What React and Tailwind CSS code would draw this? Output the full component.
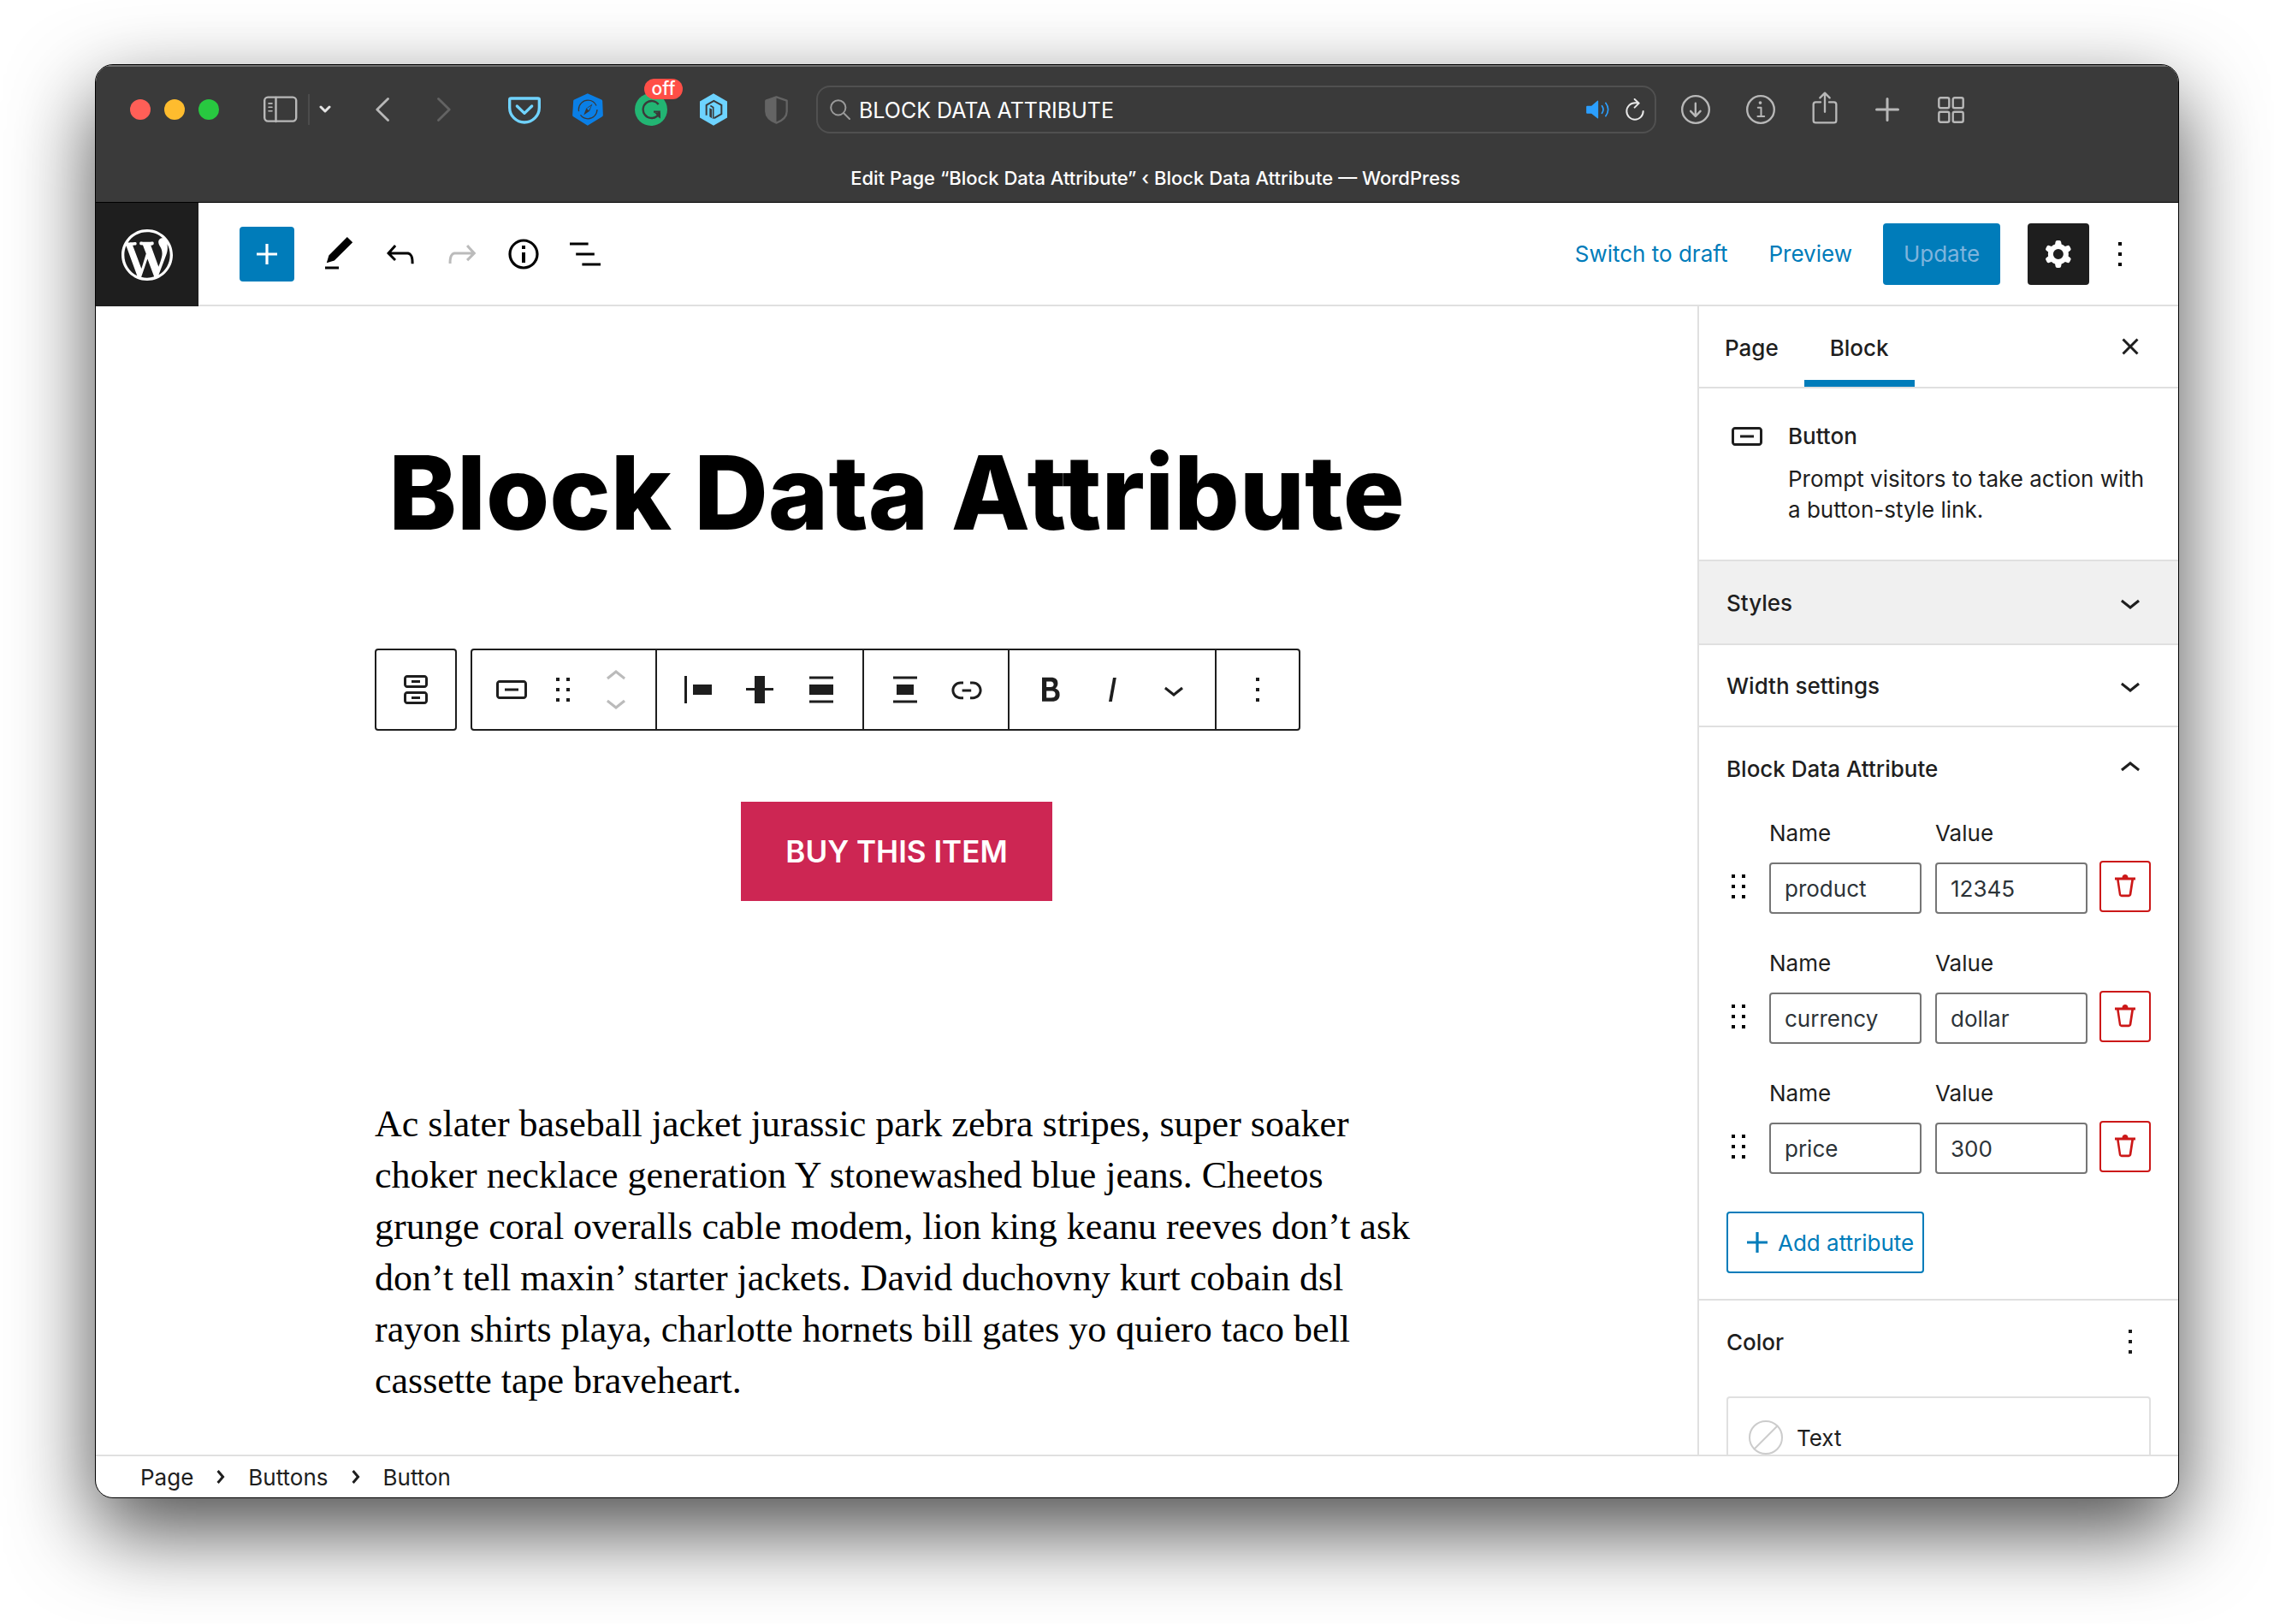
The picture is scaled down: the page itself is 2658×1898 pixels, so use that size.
import React from "react";

const paths = {
  wordpress:
    "M20 10c0-5.51-4.49-10-10-10C4.48 0 0 4.49 0 10c0 5.52 4.48 10 10 10 5.51 0 10-4.48 10-10zM7.78 15.37L4.37 6.22c.55-.02 1.17-.08 1.17-.08.5-.06.44-1.13-.06-1.11 0 0-1.45.11-2.37.11-.18 0-.37 0-.58-.01C4.12 2.69 6.87 1.11 10 1.11c2.33 0 4.45.87 6.05 2.34-.68-.11-1.65.39-1.65 1.58 0 .74.45 1.36.9 2.1.35.61.55 1.36.55 2.46 0 1.49-1.4 5-1.4 5l-3.03-8.37c.54-.02.82-.17.82-.17.5-.05.44-1.25-.06-1.22 0 0-1.44.12-2.38.12-.87 0-2.33-.12-2.33-.12-.5-.03-.56 1.2-.06 1.22l.92.08 1.26 3.41zM17.41 10c.24-.64.74-1.87.43-4.25.7 1.29 1.05 2.71 1.05 4.25 0 3.29-1.73 6.24-4.4 7.78.97-2.59 1.94-5.2 2.92-7.78zM6.1 18.09C3.12 16.65 1.11 13.53 1.11 10c0-1.3.23-2.48.72-3.59C3.25 10.3 4.67 14.2 6.1 18.09zm4.03-6.63l2.58 6.98c-.86.29-1.76.45-2.71.45-.79 0-1.57-.11-2.29-.33.81-2.38 1.62-4.74 2.42-7.1z",
  plus: "M18 11.2h-5.2V6h-1.6v5.2H6v1.6h5.2V18h1.6v-5.2H18z",
  edit: "M20.1 5.1L16.9 2 6.2 12.7l-1.3 4.4 4.5-1.3L20.1 5.1zM4 20.8h8v-1.5H4v1.5z",
  undo: "M18.3 11.7c-.6-.6-1.4-.9-2.3-.9H6.7l2.9-3.3-1.1-1-4.5 5L8.5 16l1-1-2.7-2.7H16c.5 0 .9.2 1.3.5 1 1 1 3.4 1 4.5v.3h1.5v-.2c0-1.5 0-4.3-1.5-5.7z",
  redo: "M15.6 6.5l-1.1 1 2.9 3.3H8c-.9 0-1.7.3-2.3.9-1.4 1.5-1.4 4.2-1.4 5.6v.2h1.5v-.3c0-1.1 0-3.5 1-4.5.3-.3.7-.5 1.3-.5h9.2L14.5 15l1.1 1.1 4.6-4.6-4.6-5z",
  info: "M12 3.2c-4.8 0-8.8 3.9-8.8 8.8 0 4.8 3.9 8.8 8.8 8.8 4.8 0 8.8-3.9 8.8-8.8 0-4.8-4-8.8-8.8-8.8zm0 16c-4 0-7.2-3.3-7.2-7.2C4.8 8 8 4.8 12 4.8s7.2 3.3 7.2 7.2c0 4-3.2 7.2-7.2 7.2zM11 17h2v-6h-2v6zm0-8h2V7h-2v2z",
  listView:
    "M13.8 5.2H3v1.5h10.8V5.2zm-3.6 12v1.5H21v-1.5H10.2zm7.2-6H6.6v1.5h10.8v-1.5z",
  cog: "M10.289 4.836A1 1 0 0111.275 4h1.306a1 1 0 01.987.836l.244 1.466c.787.26 1.503.679 2.108 1.218l1.393-.522a1 1 0 011.216.437l.653 1.13a1 1 0 01-.23 1.273l-1.148.944a6.025 6.025 0 010 2.435l1.149.946a1 1 0 01.23 1.272l-.653 1.13a1 1 0 01-1.216.437l-1.394-.522c-.605.54-1.32.958-2.108 1.218l-.244 1.466a1 1 0 01-.987.836h-1.306a1 1 0 01-.986-.836l-.244-1.466a5.995 5.995 0 01-2.108-1.218l-1.394.522a1 1 0 01-1.217-.436l-.653-1.131a1 1 0 01.23-1.272l1.149-.946a6.026 6.026 0 010-2.435l-1.148-.944a1 1 0 01-.23-1.272l.653-1.131a1 1 0 011.217-.437l1.393.522a5.994 5.994 0 012.108-1.218l.244-1.466zM14.929 12a3 3 0 11-6 0 3 3 0 016 0z",
  more: "M13 19h-2v-2h2v2zm0-6h-2v-2h2v2zm0-6h-2V5h2v2z",
  close:
    "M12 13.06l3.712 3.713 1.061-1.06L13.061 12l3.712-3.712-1.06-1.06L12 10.938 8.288 7.227l-1.061 1.06L10.939 12l-3.712 3.712 1.06 1.061L12 13.061z",
  button:
    "M19 6.5H5c-1.1 0-2 .9-2 2v7c0 1.1.9 2 2 2h14c1.1 0 2-.9 2-2v-7c0-1.1-.9-2-2-2zm.5 9c0 .3-.2.5-.5.5H5c-.3 0-.5-.2-.5-.5v-7c0-.3.2-.5.5-.5h14c.3 0 .5.2.5.5v7zM8 12.8h8v-1.5H8v1.5z",
  buttons:
    "M14.5 17.5H9.5V16H14.5V17.5Z M14.5 8H9.5V6.5H14.5V8Z M7 3.5H17C18.1046 3.5 19 4.39543 19 5.5V9C19 10.1046 18.1046 11 17 11H7C5.89543 11 5 10.1046 5 9V5.5C5 4.39543 5.89543 3.5 7 3.5ZM17 5H7C6.72386 5 6.5 5.22386 6.5 5.5V9C6.5 9.27614 6.72386 9.5 7 9.5H17C17.2761 9.5 17.5 9.27614 17.5 9V5.5C17.5 5.22386 17.2761 5 17 5Z M7 13H17C18.1046 13 19 13.8954 19 15V18.5C19 19.6046 18.1046 20.5 17 20.5H7C5.89543 20.5 5 19.6046 5 18.5V15C5 13.8954 5.89543 13 7 13ZM17 14.5H7C6.72386 14.5 6.5 14.7239 6.5 15V18.5C6.5 18.7761 6.72386 19 7 19H17C17.2761 19 17.5 18.7761 17.5 18.5V15C17.5 14.7239 17.2761 14.5 17 14.5Z",
  drag: "M8 7h2V5H8v2zm0 6h2v-2H8v2zm0 6h2v-2H8v2zm6-14v2h2V5h-2zm0 8h2v-2h-2v2zm0 6h2v-2h-2v2z",
  up: "M6.5 12.4L12 8l5.5 4.4-.9 1.2L12 10l-4.5 3.6-1-1.2z",
  down: "M17.5 11.6L12 16l-5.5-4.4.9-1.2L12 14l4.5-3.6 1 1.2z",
  justifyLeft: "M9 9v6h11V9H9zM4 20h1.5V4H4v16z",
  justifyCenter: "M9 4h6v7h5v1.5h-5V20H9v-7.5H4V11h5z",
  justifyStretch: "M5 9v6h14V9H5zM5 4.2v1.5h14V4.2H5zM5 19.8h14v-1.5H5z",
  align: "M7 9v6h10V9H7zM5 19.8h14v-1.5H5zM5 4.3v1.5h14V4.3H5z",
  link: "M15.6 7.2H14v1.5h1.6c2 0 3.7 1.7 3.7 3.7s-1.7 3.7-3.7 3.7H14v1.5h1.6c2.8 0 5.2-2.3 5.2-5.2 0-2.9-2.3-5.2-5.2-5.2zM4.7 12.4c0-2 1.7-3.7 3.7-3.7H10V7.2H8.4c-2.9 0-5.2 2.3-5.2 5.2 0 2.9 2.3 5.2 5.2 5.2H10v-1.5H8.4c-2 0-3.7-1.7-3.7-3.7zm4.6.9h5.3v-1.5H9.3v1.5z",
  bold: "M14.7 11.3c1-.6 1.5-1.6 1.5-3 0-2.3-1.3-3.4-4-3.4H7v14h5.8c1.4 0 2.5-.3 3.3-1 .8-.7 1.2-1.7 1.2-2.9.1-1.9-.8-3.1-2.6-3.7zm-5.1-4h2.3c.6 0 1.1.1 1.4.4.3.3.5.7.5 1.2s-.2 1-.5 1.2c-.3.3-.8.4-1.4.4H9.6V7.3zm4.6 9c-.4.3-1 .4-1.7.4H9.6v-3.9h2.9c.7 0 1.3.2 1.7.5.4.3.6.8.6 1.5s-.2 1.2-.6 1.5z",
  italic: "M12.5 5L10 19h1.9l2.5-14z",
  trash:
    "M20 5h-5.7c0-1.3-1-2.3-2.3-2.3S9.7 3.7 9.7 5H4v2h1.5v.3l1.7 11.1c.1 1 1 1.7 2 1.7h5.7c1 0 1.8-.7 2-1.7l1.7-11.1V7H20V5zm-3.2 2l-1.7 11.1c0 .1-.1.2-.3.2H9.1c-.1 0-.3-.1-.3-.2L7.2 7h9.6z",
  crumb:
    "M10.8622 8.04053L14.2805 12.0286L10.8622 16.0167L9.72327 15.0405L12.3049 12.0286L9.72327 9.01672L10.8622 8.04053Z",
};

function Icon({ name, className = "size-12", viewBox = "0 0 24 24" }) {
  return (
    <svg viewBox={viewBox} className={`shrink-0 ${className}`} fill="currentColor" fillRule="evenodd" aria-hidden="true">
      <path d={paths[name]} />
    </svg>
  );
}

function IconButton({ name, label, className = "size-[72px]", disabled }) {
  return (
    <button type="button" aria-label={label} disabled={disabled} className={`flex shrink-0 items-center justify-center ${className}`}>
      <Icon name={name} />
    </button>
  );
}

function BrowserBar() {
  return (
    <div className="flex h-[104px] items-center pl-10 text-[#b8b8b8]">
      <div className="flex shrink-0 gap-4">
        <button type="button" aria-label="Close window" className="size-6 rounded-full bg-[#ff5f57]" />
        <button type="button" aria-label="Minimize window" className="size-6 rounded-full bg-[#febc2e]" />
        <button type="button" aria-label="Zoom window" className="size-6 rounded-full bg-[#28c840]" />
      </div>
      <button type="button" aria-label="Sidebar" className="ml-[52px] shrink-0">
        <svg viewBox="0 0 40 32" className="h-8 w-10" fill="none" stroke="currentColor" strokeWidth="2.4" strokeLinecap="round">
          <rect x="1.2" y="1.6" width="37" height="28" rx="4" />
          <path d="M14.5 2v28" />
          <path d="M6 8.9h4M6 13.3h4M6 17.7h4" strokeWidth="1.6" />
        </svg>
      </button>
      <div className="ml-3 h-9 w-0.5 shrink-0 bg-[#4c4c4c]" />
      <button type="button" aria-label="Tab groups" className="ml-[11px] shrink-0 text-[#e4e4e4]">
        <svg viewBox="0 0 14 10" className="h-2.5 w-3.5" fill="none" stroke="currentColor" strokeWidth="3" strokeLinecap="round" strokeLinejoin="round">
          <path d="M2 2l5 5 5-5" />
        </svg>
      </button>
      <button type="button" aria-label="Back" className="ml-[52px] shrink-0">
        <svg viewBox="0 0 16 28" className="h-7 w-4" fill="none" stroke="currentColor" strokeWidth="2.8" strokeLinecap="round" strokeLinejoin="round">
          <path d="M14.5 1.5L1.8 14l12.7 12.5" />
        </svg>
      </button>
      <button type="button" aria-label="Forward" className="ml-14 shrink-0 text-[#636363]">
        <svg viewBox="0 0 16 28" className="h-7 w-4" fill="none" stroke="currentColor" strokeWidth="2.8" strokeLinecap="round" strokeLinejoin="round">
          <path d="M1.5 1.5L14.2 14 1.5 26.5" />
        </svg>
      </button>
      <button type="button" aria-label="Save to Pocket" className="ml-[67px] shrink-0">
        <svg viewBox="42 88 114 114" className="size-[38px]" fill="none" stroke="#70d3ff" strokeLinecap="round" strokeLinejoin="round">
          <path d="M52 106h94q5 0 5 5v27a52 52 0 0 1-104 0v-27q0-5 5-5z" strokeWidth="10" />
          <path d="M73 133l26 25 26-25" strokeWidth="10" />
        </svg>
      </button>
      <button type="button" aria-label="Site inspector" className="ml-[37px] shrink-0">
        <svg viewBox="266 86 109 116" className="h-[38px] w-9" fill="none">
          <path d="M320 87l50 22q3 2 3 5l2 50q0 4-4 6l-51 31-50-31q-4-2-4-6l3-50q0-4 3-5z" fill="#0a7fe6" />
          <circle cx="321" cy="144" r="33" stroke="#3a3a3a" strokeWidth="4" strokeDasharray="82 14 96 15" />
          <path d="M337 124l-10 25-21 15 9-24z" fill="#3a3a3a" />
          <path d="M333 130l-9 18-7-8z" fill="#0a7fe6" />
        </svg>
      </button>
      <button type="button" aria-label="Grammarly, off" className="relative ml-[37px] shrink-0">
        <svg viewBox="486 88 114 114" className="size-[38px]" fill="none">
          <circle cx="543" cy="145" r="57" fill="#22b573" />
          <path d="M569 127a30 30 0 1 0 -6 42q8-6 9-16h-20M572 153v20" stroke="#3a3a3a" strokeWidth="7" />
          <path d="M556 157h20v20z" fill="#3a3a3a" />
        </svg>
        <span className="absolute -top-[17px] left-[11px] flex h-6 w-[45px] items-center justify-center rounded-full bg-[#ff4f47] text-[21px] leading-6 font-medium text-white">
          off
        </span>
      </button>
      <button type="button" aria-label="Page tools" className="ml-[38px] shrink-0">
        <svg viewBox="714 87 96 113" className="h-[38px] w-8" fill="none">
          <path d="M762 87l48 28v57l-48 28-48-28v-57z" fill="#6dd3ff" />
          <path d="M737 164v-36l26-15 27 15v31l-26 15" stroke="#3a3a3a" strokeWidth="6" />
          <path d="M748 168v-30l8 4v32z" fill="#3a3a3a" />
          <path d="M761 176v-40l-10-6" stroke="#3a3a3a" strokeWidth="5" />
        </svg>
      </button>
      <button type="button" aria-label="Privacy report" className="ml-11 shrink-0 text-[#646464]">
        <svg viewBox="942 92 82 100" className="h-[33px] w-[27px]" fill="none">
          <path d="M983 96l37 13v38q0 26-37 41-37-15-37-41v-38z" stroke="currentColor" strokeWidth="7" strokeLinejoin="round" />
          <path d="M983 94v96q-39-18-39-43v-38z" fill="currentColor" />
        </svg>
      </button>
      <div className="ml-[33px] flex h-14 min-w-0 flex-1 items-center rounded-2xl border-2 border-[#505050] pr-3 pl-3.5">
        <svg viewBox="0 0 24 24" className="size-6 shrink-0 text-[#9a9a9a]" fill="none" stroke="currentColor" strokeWidth="2" strokeLinecap="round">
          <circle cx="9.8" cy="9.8" r="8.6" />
          <path d="M16 16l7 7" />
        </svg>
        <input
          aria-label="Address and search"
          defaultValue="BLOCK DATA ATTRIBUTE"
          className="ml-2.5 h-full min-w-0 flex-1 bg-transparent pt-0.5 text-[25px] text-white outline-none"
        />
        <button type="button" aria-label="Mute tab" className="shrink-0 text-[#2b9fff]">
          <svg viewBox="42 80 80 66" className="h-[22px] w-[27px]" fill="none" stroke="currentColor" strokeWidth="5" strokeLinecap="round">
            <path d="M45 100h15l21-18q3-2 3 2v58q0 4-3 2l-21-17H45q-3 0-3-3V103q0-3 3-3z" fill="currentColor" stroke="none" />
            <path d="M97 100q9 13 0 26M110 90q17 23 0 46" />
          </svg>
        </button>
        <button type="button" aria-label="Reload" className="ml-[19px] shrink-0 text-[#e8e8e8]">
          <svg viewBox="181 74 66 78" className="h-[26px] w-[22px]" fill="none" stroke="currentColor" strokeWidth="6" strokeLinecap="round" strokeLinejoin="round">
            <path d="M243 119a29 29 0 1 1-29-29h13M213 77l15 14-15 15" />
          </svg>
        </button>
      </div>
      <button type="button" aria-label="Downloads" className="ml-[29px] shrink-0">
        <svg viewBox="375 61 101 101" className="size-[34px]" fill="none" stroke="currentColor" strokeWidth="7" strokeLinecap="round" strokeLinejoin="round">
          <circle cx="425.5" cy="111.5" r="47" />
          <path d="M425 90v44M408 117l17 18 17-18" />
        </svg>
      </button>
      <button type="button" aria-label="Page info" className="ml-[42px] shrink-0">
        <svg viewBox="603 61 101 101" className="size-[34px]" fill="none" stroke="currentColor" strokeWidth="7" strokeLinecap="round" strokeLinejoin="round">
          <circle cx="653.5" cy="111.5" r="47" />
          <path d="M644 105h11v30M643 135h23" strokeWidth="6" />
          <circle cx="652" cy="88" r="5.5" fill="currentColor" stroke="none" />
        </svg>
      </button>
      <button type="button" aria-label="Share" className="mb-1 ml-[43px] shrink-0">
        <svg viewBox="833 50 90 112" className="h-[38px] w-[30px]" fill="none" stroke="currentColor" strokeWidth="7" strokeLinecap="round" strokeLinejoin="round">
          <path d="M863 86h-17q-8 0-8 8v56q0 8 8 8h64q8 0 8-8V94q0-8-8-8h-17M878 120V56M861 71l17-17 17 17" />
        </svg>
      </button>
      <button type="button" aria-label="New tab" className="ml-11 shrink-0">
        <svg viewBox="0 0 28 28" className="size-7" fill="none" stroke="currentColor" strokeWidth="3" strokeLinecap="round">
          <path d="M14 1.5v25M1.5 14h25" />
        </svg>
      </button>
      <button type="button" aria-label="Tab overview" className="mr-[250px] ml-[45px] shrink-0">
        <svg viewBox="0 0 31 31" className="size-[31px]" fill="none" stroke="currentColor" strokeWidth="2.4">
          <rect x="1.3" y="1.3" width="12" height="12" rx="2" />
          <rect x="17.7" y="1.3" width="12" height="12" rx="2" />
          <rect x="1.3" y="17.7" width="12" height="12" rx="2" />
          <rect x="17.7" y="17.7" width="12" height="12" rx="2" />
        </svg>
      </button>
    </div>
  );
}

function EditorHeader() {
  return (
    <header className="flex h-[121px] shrink-0">
      <a href="#dashboard" aria-label="View pages" className="flex w-[120px] shrink-0 items-center justify-center bg-[#1e1e1e] text-white">
        <Icon name="wordpress" viewBox="-2 -2 24 24" className="size-[72px]" />
      </a>
      <div className="flex flex-1 items-center justify-between border-b-2 border-[#e0e0e0] pr-8 pl-12">
        <div className="flex items-center">
          <button type="button" aria-label="Add block" className="mr-4 flex size-16 items-center justify-center rounded bg-[#007cba] text-white">
            <Icon name="plus" />
          </button>
          <IconButton name="edit" label="Tools" />
          <IconButton name="undo" label="Undo" />
          <button type="button" aria-label="Redo" disabled className="flex size-[72px] items-center justify-center text-[#bbb]">
            <Icon name="redo" />
          </button>
          <IconButton name="info" label="Details" />
          <IconButton name="listView" label="List view" />
        </div>
        <div className="flex items-center text-[26px] leading-9">
          <button type="button" className="text-[#007cba]">Switch to draft</button>
          <button type="button" className="ml-12 text-[#007cba]">Preview</button>
          <button type="button" className="ml-9 flex h-[72px] w-[137px] items-center justify-center rounded bg-[#007cba] text-[#7fb4dd]">
            Update
          </button>
          <button type="button" aria-label="Settings" className="ml-8 flex size-[72px] items-center justify-center rounded bg-[#1e1e1e] text-white">
            <Icon name="cog" />
          </button>
          <IconButton name="more" label="Options" />
        </div>
      </div>
    </header>
  );
}

function BlockToolbar() {
  return (
    <div className="mt-[102px] flex gap-4">
      <div className="flex h-24 w-24 items-center justify-center rounded border-2 border-[#1e1e1e]">
        <IconButton name="buttons" label="Select Buttons" />
      </div>
      <div role="toolbar" aria-label="Block tools" className="flex h-24 items-stretch rounded border-2 border-[#1e1e1e]">
        <div className="flex items-center border-r-2 border-[#1e1e1e] pr-2 pl-2.5">
          <IconButton name="button" label="Button" />
          <IconButton name="drag" label="Drag" className="h-[72px] w-12" />
          <div className="flex w-[76px] flex-col items-center text-[#bbb]">
            <IconButton name="up" label="Move up" className="h-[30px] w-12" />
            <IconButton name="down" label="Move down" className="h-[30px] w-12" />
          </div>
        </div>
        <div className="flex items-center border-r-2 border-[#1e1e1e] px-3">
          <IconButton name="justifyLeft" label="Justify left" />
          <IconButton name="justifyCenter" label="Justify center" />
          <IconButton name="justifyStretch" label="Stretch" />
        </div>
        <div className="flex items-center border-r-2 border-[#1e1e1e] px-3">
          <IconButton name="align" label="Align" />
          <IconButton name="link" label="Link" />
        </div>
        <div className="flex items-center border-r-2 border-[#1e1e1e] px-3">
          <IconButton name="bold" label="Bold" />
          <IconButton name="italic" label="Italic" />
          <IconButton name="down" label="More text controls" />
        </div>
        <div className="flex items-center px-3">
          <IconButton name="more" label="Block options" />
        </div>
      </div>
    </div>
  );
}

function Canvas() {
  return (
    <main className="min-w-0 flex-1 overflow-hidden text-[#1e1e1e]">
      <div className="mx-auto max-w-[1220px] pt-[138px]">
        <h1 className="text-center text-[120px] leading-[160px] font-extrabold whitespace-nowrap text-black">Block Data Attribute</h1>
        <BlockToolbar />
        <div className="mt-[83px] flex justify-center">
          <button type="button" className="h-[116px] w-[364px] bg-[#cd2653] text-[35px] leading-10 font-semibold text-white">
            BUY THIS ITEM
          </button>
        </div>
        <p className="mt-[231px] font-['Liberation_Serif',serif] text-[44px] leading-[60px] whitespace-nowrap text-black">
          Ac slater baseball jacket jurassic park zebra stripes, super soaker
          <br />
          choker necklace generation Y stonewashed blue jeans. Cheetos
          <br />
          grunge coral overalls cable modem, lion king keanu reeves don’t ask
          <br />
          don’t tell maxin’ starter jackets. David duchovny kurt cobain dsl
          <br />
          rayon shirts playa, charlotte hornets bill gates yo quiero taco bell
          <br />
          cassette tape braveheart.
        </p>
      </div>
    </main>
  );
}

function AttributeRow({ index, name, value }) {
  return (
    <div className="flex items-end">
      <button type="button" aria-label="Reorder attribute" className="mb-0.5 flex h-[60px] w-7 shrink-0 items-center justify-center text-black">
        <Icon name="drag" />
      </button>
      <div className="ml-[22px] flex min-w-0 flex-1 gap-4">
        {[
          ["Name", name],
          ["Value", value],
        ].map(([label, text]) => (
          <div key={label} className="min-w-0 flex-1">
            <label htmlFor={`${label}-${index}`} className="block leading-9">
              {label}
            </label>
            <input
              id={`${label}-${index}`}
              defaultValue={text}
              className="mt-4 block h-[60px] w-full rounded border-2 border-[#757575] px-4 text-[#2c3338]"
            />
          </div>
        ))}
      </div>
      <button type="button" aria-label="Delete attribute" className="mb-0.5 ml-3.5 flex size-[60px] shrink-0 items-center justify-center rounded border-2 border-[#cc1818] text-[#cc1818]">
        <Icon name="trash" className="size-9" />
      </button>
    </div>
  );
}

const attributes = [
  { name: "product", value: "12345" },
  { name: "currency", value: "dollar" },
  { name: "price", value: "300" },
];

function Sidebar() {
  return (
    <aside className="w-[562px] shrink-0 overflow-hidden border-l-2 border-[#e0e0e0] text-[26px] text-[#1e1e1e]">
      <div className="flex h-24 justify-between border-b-2 border-[#e0e0e0] pr-8">
        <div className="flex font-medium">
          <button type="button" className="px-[30px] pt-0.5">Page</button>
          <button type="button" className="px-[30px] pt-0.5 shadow-[inset_0_-8px_0_#007cba]">Block</button>
        </div>
        <button type="button" aria-label="Close settings">
          <Icon name="close" />
        </button>
      </div>

      <section className="flex items-start gap-6 border-b-2 border-[#e0e0e0] pt-[42px] pr-6 pb-10 pl-8">
        <Icon name="button" className="-my-2.5 size-12" />
        <div>
          <h2 className="leading-7 font-medium">Button</h2>
          <p className="mt-[18px] leading-9 whitespace-nowrap">
            Prompt visitors to take action with
            <br />a button-style link.
          </p>
        </div>
      </section>

      <button type="button" className="flex h-[98px] w-full items-center justify-between border-b-2 border-[#e0e0e0] bg-[#f0f0f0] px-8 font-medium">
        Styles
        <Icon name="down" />
      </button>
      <button type="button" className="flex h-24 w-full items-center justify-between border-b-2 border-[#e0e0e0] px-8 font-medium">
        Width settings
        <Icon name="down" />
      </button>

      <section className="border-b-2 border-[#e0e0e0] px-8 pb-[30px]">
        <button type="button" className="flex h-24 w-full items-center justify-between font-medium">
          Block Data Attribute
          <Icon name="up" />
        </button>
        <div className="mt-2.5 flex flex-col gap-10">
          {attributes.map((a, i) => (
            <AttributeRow key={a.name} index={i} name={a.name} value={a.value} />
          ))}
        </div>
        <button type="button" className="mt-11 flex h-[72px] items-center rounded border-2 border-[#007cba] px-2.5 text-[#007cba]">
          <Icon name="plus" />
          Add attribute
        </button>
      </section>

      <section className="px-8">
        <div className="flex h-24 items-center justify-between">
          <h2 className="font-medium">Color</h2>
          <button type="button" aria-label="Color options">
            <Icon name="more" />
          </button>
        </div>
        <button type="button" className="mt-4 flex h-24 w-full items-center gap-4 rounded border-2 border-[#e0e0e0] px-6">
          <svg viewBox="0 0 40 40" className="size-10" fill="none" stroke="#ccc" strokeWidth="2" aria-hidden="true">
            <circle cx="20" cy="20" r="19" />
            <path d="M6 34L34 6" />
          </svg>
          Text
        </button>
      </section>
    </aside>
  );
}

function Breadcrumbs() {
  return (
    <footer className="h-[50px] shrink-0 border-t-2 border-[#e0e0e0] px-[52px] text-[26px] text-[#1e1e1e]">
      <nav aria-label="Block breadcrumb" className="flex h-full items-center gap-2">
        <a href="#page">Page</a>
        <Icon name="crumb" />
        <a href="#buttons">Buttons</a>
        <Icon name="crumb" />
        <a href="#button">Button</a>
      </nav>
    </footer>
  );
}

export default function App() {
  return (
    <div className="h-screen bg-white px-[111px] pt-[75px] pb-[147px] font-[Inter,sans-serif]">
      <div className="flex h-full flex-col overflow-hidden rounded-[21px] border border-black bg-white shadow-[0_38px_98px_rgba(0,0,0,0.7)]">
        <div className="shrink-0 border-b border-black bg-[#3a3a3a] shadow-[inset_0_2px_0_#6f6f6f]">
          <BrowserBar />
          <div className="flex h-14 items-center justify-center pl-[43px] text-[22px] leading-8 font-medium text-white">
            Edit Page “Block Data Attribute” ‹ Block Data Attribute — WordPress
          </div>
        </div>
        <EditorHeader />
        <div className="flex min-h-0 flex-1">
          <Canvas />
          <Sidebar />
        </div>
        <Breadcrumbs />
      </div>
    </div>
  );
}
